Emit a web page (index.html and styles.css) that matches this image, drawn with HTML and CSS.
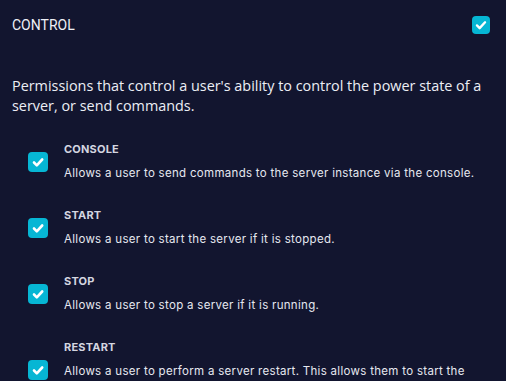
FILE: index.html
```html
<!DOCTYPE html>
<html>
<head>
<meta charset="utf-8">
<link rel="stylesheet" href="styles.css">
</head>
<body>
<div class="panel">
  <div class="header">
    <span class="title">CONTROL</span>
    <span class="check check-sm"><svg viewBox="0 0 20 20"><path d="M5.5 10.5l3 3 6-6.5" fill="none" stroke="#fff" stroke-width="2.6" stroke-linecap="round" stroke-linejoin="round"/></svg></span>
  </div>
  <p class="intro">Permissions that control a user's ability to control the power state of a server, or send commands.</p>
  <div class="items">
    <div class="item">
      <span class="check"><svg viewBox="0 0 20 20"><path d="M6 10.5l2.8 2.8 5.4-5.8" fill="none" stroke="#fff" stroke-width="2.6" stroke-linecap="round" stroke-linejoin="round"/></svg></span>
      <div class="text">
        <div class="label">CONSOLE</div>
        <div class="desc">Allows a user to send commands to the server instance via the console.</div>
      </div>
    </div>
    <div class="item">
      <span class="check"><svg viewBox="0 0 20 20"><path d="M6 10.5l2.8 2.8 5.4-5.8" fill="none" stroke="#fff" stroke-width="2.6" stroke-linecap="round" stroke-linejoin="round"/></svg></span>
      <div class="text">
        <div class="label">START</div>
        <div class="desc">Allows a user to start the server if it is stopped.</div>
      </div>
    </div>
    <div class="item">
      <span class="check"><svg viewBox="0 0 20 20"><path d="M6 10.5l2.8 2.8 5.4-5.8" fill="none" stroke="#fff" stroke-width="2.6" stroke-linecap="round" stroke-linejoin="round"/></svg></span>
      <div class="text">
        <div class="label">STOP</div>
        <div class="desc">Allows a user to stop a server if it is running.</div>
      </div>
    </div>
    <div class="item">
      <span class="check"><svg viewBox="0 0 20 20"><path d="M6 10.5l2.8 2.8 5.4-5.8" fill="none" stroke="#fff" stroke-width="2.6" stroke-linecap="round" stroke-linejoin="round"/></svg></span>
      <div class="text">
        <div class="label">RESTART</div>
        <div class="desc">Allows a user to perform a server restart. This allows them to start the server if it is offline, but not put the server in a completely stopped state.</div>
      </div>
    </div>
  </div>
</div>
</body>
</html>
```

FILE: styles.css
```css
html, body {
  margin: 0;
  padding: 0;
  background: #12152f;
  height: 100%;
  overflow: hidden;
}
.panel {
  font-family: "Inter", "Noto Sans", sans-serif;
  color: #e5e7eb;
  padding: 12px 16px 0 12px;
}
.header {
  display: flex;
  align-items: center;
  justify-content: space-between;
  height: 26px;
}
.title {
  font-family: "Roboto", sans-serif;
  font-size: 14px;
  color: #eef0f6;
}
.check {
  display: inline-flex;
  width: 20px;
  height: 20px;
  border-radius: 4px;
  background: #06b6d4;
  flex: none;
}
.check svg { width: 100%; height: 100%; }
.check-sm { width: 18px; height: 18px; }
.intro {
  margin: 38px 0 0 0;
  font-family: "Open Sans", sans-serif;
  font-size: 14.4px;
  line-height: 20px;
  color: #eceef5;
}
.items {
  margin: 24px 0 0 16px;
  display: flex;
  flex-direction: column;
  gap: 23px;
}
.item {
  display: flex;
  align-items: center;
  gap: 16px;
}
.label {
  font-size: 11px;
  font-weight: 700;
  line-height: 18px;
  color: #d4d6e0;
  letter-spacing: 0.2px;
}
.desc {
  margin-top: 5px;
  font-size: 11.5px;
  line-height: 20px;
  color: #e6e8ef;
  letter-spacing: 0.3px;
}
```
